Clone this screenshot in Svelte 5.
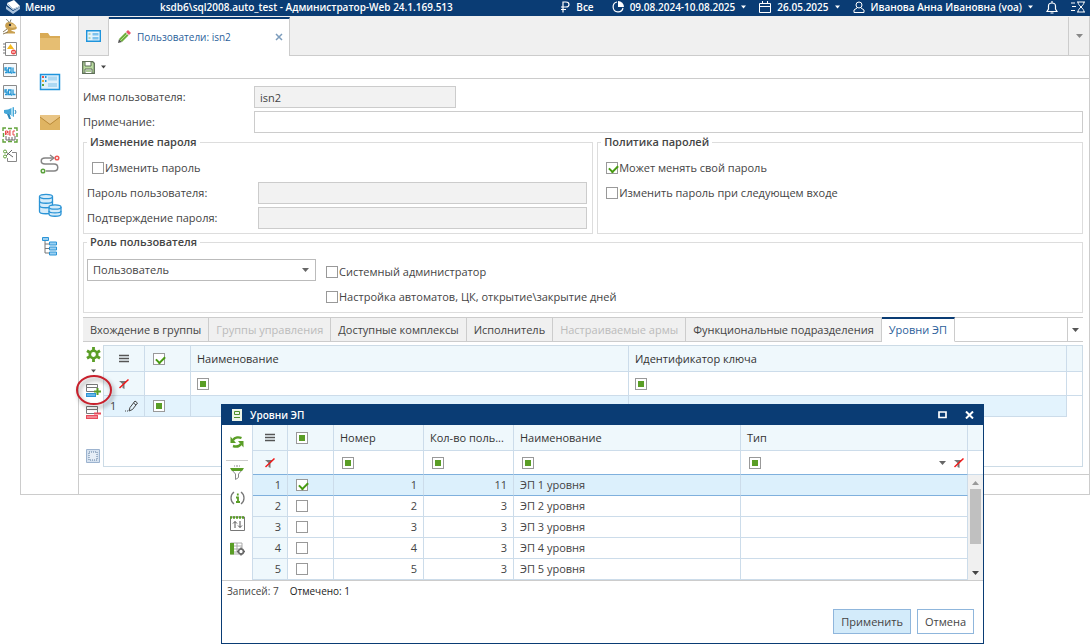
<script>
  const tools = ['bug', 'alert', 'sql', 'sql', 'horn', 'rec', 'cut'];
  const sections = ['folder', 'cards', 'mail', 'route', 'base', 'tree'];

  const tabs = [
    { title: 'Вхождение в группы' },
    { title: 'Группы управления', disabled: true },
    { title: 'Доступные комплексы' },
    { title: 'Исполнитель' },
    { title: 'Настраиваемые армы', disabled: true },
    { title: 'Функциональные подразделения' },
    { title: 'Уровни ЭП' }
  ];
  let activeTab = $state('Уровни ЭП');

  let levels = $state([
    { id: 1, users: 11, name: 'ЭП 1 уровня', checked: true },
    { id: 2, users: 3, name: 'ЭП 2 уровня', checked: false },
    { id: 3, users: 3, name: 'ЭП 3 уровня', checked: false },
    { id: 4, users: 3, name: 'ЭП 4 уровня', checked: false },
    { id: 5, users: 3, name: 'ЭП 5 уровня', checked: false }
  ]);
  let marked = $derived(levels.filter((l) => l.checked).length);
</script>

{#snippet caret()}
  <svg class="caret" width="7" height="4" viewBox="0 0 7 4"><path d="M0 0h7L3.500 4z" fill="currentColor" /></svg>
{/snippet}

{#snippet lines()}
  <svg width="10" height="9" viewBox="0 0 10 9"><path d="M0 1.500h10M0 4.500h10M0 7.500h10" stroke="#555" stroke-width="1.500" /></svg>
{/snippet}

{#snippet nofilter()}
  <svg width="10" height="10" viewBox="0 0 10 10"><path d="M0 2h8L5.500 5v5l-2-1V5z" fill="#777" /><path d="M.5 9L9.500.5" stroke="#f01818" stroke-width="1.500" /></svg>
{/snippet}

{#snippet icon(name)}
  {#if name === 'bug'}
    <svg width="16" height="16" viewBox="0 0 16 16">
      <path d="M3 14c2-1 3-2 3-3L4 9C2 6 4 3 7 3c4 0 7 3 8 6-1 2-4 2-6 2l1 1 3 1v1.500H4z" fill="#c9a050" />
      <path d="M7 5c3-1 6 1 7 3-2 1-5 1-7 0z" fill="#edc880" />
      <path d="M4 .5c1 0 2 1 3 3M9 .5L8 3" stroke="#776" fill="none" /><circle cx="8" cy="6" r="1.200" fill="#333" />
      <path d="M1 13l4-3M1 15l5-2" stroke="#8b7a5a" fill="none" />
    </svg>
  {:else if name === 'alert'}
    <svg width="16" height="16" viewBox="0 0 16 16">
      <path d="M3.500 1.500h11v13h-11z" fill="#fff" stroke="#8a8a8a" />
      <path d="M1 3h3M1 6h3M1 9h3M1 12h3" stroke="#777" />
      <path d="M8.500 3l3.500 5H5z" fill="#f5b91f" /><circle cx="11.500" cy="11" r="2.500" fill="#ea4848" /><path d="M10 11h3" stroke="#fff" />
    </svg>
  {:else if name === 'sql'}
    <svg width="16" height="16" viewBox="0 0 16 16">
      <path d="M1.500 1.500h13v13h-13z" fill="#f4f9fc" stroke="#8a8a8a" />
      <path d="M5 6H3v2h2v2.500H3M6.500 6h2.500v4.500H6.500zM8 9.500l2 2M11 5.500v5h2.500" fill="none" stroke="#2495d3" stroke-width="1.300" />
    </svg>
  {:else if name === 'horn'}
    <svg width="16" height="16" viewBox="0 0 16 16">
      <path d="M2 5l4-.500L12 2v10L7 9H4L2 8z" fill="#45a7d8" /><path d="M5 9l2 5h2L7.500 9z" fill="#2c86b8" /><path d="M10 3v8" stroke="#a4d9f1" stroke-width="2" /><path d="M13 5l1 2-1 2" stroke="#2c86b8" fill="none" />
    </svg>
  {:else if name === 'rec'}
    <svg width="16" height="16" viewBox="0 0 16 16">
      <path d="M1 4V1h3M6 1.500h4M12 1h3v3M15 6v4M15 12v3h-3M10 14.500H6M4 15H1v-3M1.500 10V6" fill="none" stroke="#61a33a" stroke-width="1.400" />
      <path d="M4 9v4h9V9M7 13v-3M10 13v-3" fill="none" stroke="#666" />
      <path d="M3.500 8V4h2v2h-2l2 2M9 4H7v4h2M7 6h2M13 4h-2v4h2" fill="none" stroke="#e74b4b" />
    </svg>
  {:else if name === 'cut'}
    <svg width="16" height="16" viewBox="0 0 16 16">
      <path d="M10 4.500h4.500v9h-9V10" fill="none" stroke="#888" />
      <path d="M4 4l7 5M4 8l6-6" stroke="#666" /><circle cx="3" cy="3.500" r="1.500" fill="none" stroke="#61a33a" /><circle cx="3" cy="8.500" r="1.500" fill="none" stroke="#61a33a" />
    </svg>
  {:else if name === 'folder'}
    <svg width="22" height="20" viewBox="0 0 22 20"><path d="M1 2h8l2 3h10v14H1z" fill="#d9ab56" /><path d="M1 7h20v12H1z" fill="#e6be72" /></svg>
  {:else if name === 'cards'}
    <svg width="22" height="20" viewBox="0 0 22 20">
      <path d="M1.500 2.500h19v15h-19z" fill="#dff1fc" stroke="#1e94dc" stroke-width="1.500" />
      <path d="M9 4.500h9v4H9zM9 11h9v4H9z" fill="#abd8f3" /><path d="M3 5h2" stroke="#e7534c" stroke-width="2" /><path d="M3 9h2" stroke="#e9a93a" stroke-width="2" /><path d="M3 13h2" stroke="#5ba23d" stroke-width="2" /><path d="M6 5h1.500M6 9h1.500" stroke="#1e94dc" stroke-width="2" />
    </svg>
  {:else if name === 'mail'}
    <svg width="22" height="20" viewBox="0 0 22 20"><path d="M1 2h20v15H1z" fill="#dfb462" /><path d="M1 2h20v2l-10 7L1 4z" fill="#e9c585" /><path d="M1 4l10 7.500L21 4" fill="none" stroke="#b98a3a" /></svg>
  {:else if name === 'route'}
    <svg width="22" height="20" viewBox="0 0 22 20">
      <path d="M14 4H6C1 4 1 10 6 10h9c5 0 5 7 0 7H7" fill="none" stroke="#858585" stroke-width="1.500" /><path d="M11 1l4 3-4 3" fill="none" stroke="#858585" stroke-width="1.300" />
      <circle cx="18" cy="4" r="1.800" fill="none" stroke="#ee5855" stroke-width="1.500" /><circle cx="4" cy="17" r="1.800" fill="none" stroke="#5ba23d" stroke-width="1.500" />
    </svg>
  {:else if name === 'base'}
    <svg width="24" height="24" viewBox="0 0 24 24" fill="#d6ecfa" stroke="#2b94d6" stroke-width="1.300">
      <path d="M1.500 3.500v15c0 3 13 3 13 0v-15" /><ellipse cx="8" cy="3.500" rx="6.500" ry="2.200" /><path d="M1.500 8c0 3 13 3 13 0M1.500 12.500c0 3 13 3 13 0" fill="none" />
      <path d="M11 14v7c0 3 12 3 12 0v-7" /><ellipse cx="17" cy="14" rx="6" ry="2.200" /><path d="M11 18c0 2.500 12 2.500 12 0" fill="none" />
    </svg>
  {:else if name === 'tree'}
    <svg width="22" height="20" viewBox="0 0 22 20">
      <path d="M6 4v13M6 8h4M6 12.500h4M6 17h4" fill="none" stroke="#777" />
      <path d="M3.500 1.500h6v3h-6zM10.500 6h7v3h-7zM10.500 11h7v3h-7zM10.500 16h7v3h-7z" fill="#9bd0f2" stroke="#2b94d6" />
    </svg>
  {/if}
{/snippet}

<div class="app">
  <header class="topbar">
    <button class="menu">
      <svg width="16" height="14" viewBox="0 0 16 14"><path d="M2 3l7-3 6 6-7 3z" fill="#fff" /><path d="M1 6l7 5 7-4v2l-7 5-7-5z" fill="#a9c2dc" /><path d="M2 3v2l6 5 7-3V6L8 9z" fill="#d9e5f0" /></svg>
      Меню
    </button>
    <span class="product">ksdb6\sql2008.auto_test - Администратор-Web 24.1.169.513</span>
    <nav class="status">
      <button class="all">
        <svg width="10" height="12" viewBox="0 0 10 12"><path d="M3 11.500V1h3c4 0 4 5 0 5H1M1 8.500h5" fill="none" stroke="#fff" stroke-width="1.200" /></svg>
        Все
      </button>
      <button>
        <svg width="12" height="12" viewBox="0 0 12 12"><path d="M5 1a5 5 0 1 0 6 6" fill="none" stroke="#fff" stroke-width="1.200" /><path d="M6 0a6 6 0 0 1 6 6H6z" fill="#fff" /></svg>
        09.08.2024-10.08.2025 {@render caret()}
      </button>
      <button>
        <svg width="12" height="12" viewBox="0 0 12 12"><path d="M.5 2.500h11v9H.5zM.5 5.500h11M3.500 0v3M8.500 0v3" fill="none" stroke="#fff" /></svg>
        26.05.2025 {@render caret()}
      </button>
      <button>
        <svg width="12" height="12" viewBox="0 0 12 12"><circle cx="6" cy="4" r="3" fill="none" stroke="#fff" /><path d="M4 7L1 9v2.500h10V9L8 7" fill="none" stroke="#fff" /></svg>
        Иванова Анна Ивановна (voa) {@render caret()}
      </button>
      <button aria-label="Уведомления">
        <svg width="12" height="13" viewBox="0 0 12 13"><path d="M1 10.500h10L9.500 8V5c0-4-7-4-7 0v3zM6 0v2M4.500 12h3" fill="none" stroke="#fff" stroke-width="1.200" /></svg>
      </button>
      <button aria-label="Очередь">
        <svg width="14" height="12" viewBox="0 0 14 12"><path d="M0 2h4M1 5.500h4M0 9.500h4M6 1h8M6 11h8M7 1c0 4 6 6 6 10M13 1c0 4-6 6-6 10" fill="none" stroke="#fff" /></svg>
      </button>
    </nav>
  </header>

  <div class="workspace">
    <nav class="rail tools">
      {#each tools as name}
        <button aria-label={name}>{@render icon(name)}</button>
      {/each}
    </nav>
    <div class="frame">
      <nav class="rail sections">
        {#each sections as name}
          <button aria-label={name}>{@render icon(name)}</button>
        {/each}
      </nav>

      <main>
        <div class="pages">
          <button class="home" aria-label="Рабочий стол">
            <svg width="15" height="12" viewBox="0 0 15 12"><path d="M.7.7h13.600v10.600H.7z" fill="#e3f3fc" stroke="#1e94dc" stroke-width="1.400" /><path d="M6.500 3h6v2.500h-6zM6.500 7h6v2.500h-6z" fill="#7cc2ee" /><path d="M2.500 4h2M2.500 8h2" stroke="#8ab46e" /></svg>
          </button>
          <div class="page">
            <svg width="13" height="13" viewBox="0 0 13 13"><path d="M0 13l1-4 3 3z" fill="#555" /><path d="M1 9l6.500-6.500 3 3L4 12z" fill="#6fae3d" /><path d="M2.500 10.500L9 4" stroke="#b7dd8f" /><path d="M8 2l2-2 3 3-2 2z" fill="#e9566c" /></svg>
            <span>Пользователи: isn2</span>
            <button aria-label="Закрыть вкладку">
              <svg width="8" height="8" viewBox="0 0 8 8"><path d="M1 1l6 6M7 1L1 7" stroke="#7c9cbc" stroke-width="1.500" /></svg>
            </button>
          </div>
          <button class="more" aria-label="Список вкладок">{@render caret()}</button>
        </div>

        <div class="actions">
          <button aria-label="Сохранить">
            <svg width="13" height="13" viewBox="0 0 13 13"><path d="M.7.7h10l1.600 1.600v10H.7z" fill="#b9da9f" stroke="#5f6f58" stroke-width="1.300" /><path d="M3 1v4h6V1M3 12V8h7v4" fill="#fff" stroke="#5f6f58" /><path d="M4 10h5" stroke="#5f9b35" /></svg>
            {@render caret()}
          </button>
        </div>

        <form class="card" onsubmit={(e) => e.preventDefault()}>
          <div class="field">
            <label for="user">Имя пользователя:</label>
            <input id="user" class="short" type="text" value="isn2" readonly />
          </div>
          <div class="field">
            <label for="note">Примечание:</label>
            <input id="note" type="text" />
          </div>

          <div class="pair">
            <fieldset>
              <legend>Изменение пароля</legend>
              <label class="tick"><input type="checkbox" />Изменить пароль</label>
              <div class="field">
                <label for="pass">Пароль пользователя:</label>
                <input id="pass" type="password" readonly />
              </div>
              <div class="field">
                <label for="pass2">Подтверждение пароля:</label>
                <input id="pass2" type="password" readonly />
              </div>
            </fieldset>
            <fieldset>
              <legend>Политика паролей</legend>
              <label class="tick"><input type="checkbox" checked />Может менять свой пароль</label>
              <label class="tick"><input type="checkbox" />Изменить пароль при следующем входе</label>
            </fieldset>
          </div>

          <fieldset>
            <legend>Роль пользователя</legend>
            <div class="role">
              <div class="select">
                <select aria-label="Роль пользователя">
                  <option>Пользователь</option>
                </select>
                {@render caret()}
              </div>
              <div class="flags">
                <label class="tick"><input type="checkbox" />Системный администратор</label>
                <label class="tick"><input type="checkbox" />Настройка автоматов, ЦК, открытие\закрытие дней</label>
              </div>
            </div>
          </fieldset>

          <div class="tabs">
            {#each tabs as tab}
              <button
                type="button"
                class:active={tab.title === activeTab}
                disabled={tab.disabled}
                onclick={() => (activeTab = tab.title)}
              >{tab.title}</button>
            {/each}
            <span class="rest"></span>
            <button type="button" class="more" aria-label="Все вкладки">{@render caret()}</button>
          </div>

          <div class="panel">
            <div class="side">
              <button type="button" aria-label="Настройки">
                <svg width="15" height="15" viewBox="0 0 15 15"><circle cx="7.500" cy="7.500" r="3.700" fill="none" stroke="#5a9e26" stroke-width="2.600" /><path d="M7.500 0v3.500M7.500 11.500V15M1 3.700l3 1.800M11 9.500l3 1.800M1 11.300l3-1.800M11 5.500l3-1.800" stroke="#5a9e26" stroke-width="2.800" /></svg>
                {@render caret()}
              </button>
              <button type="button" class="add" aria-label="Добавить">
                <svg width="16" height="15" viewBox="0 0 16 15"><path d="M1.500 1.500h11v3h-11zM1.500 4.500h11v4h-11z" fill="#fff" stroke="#777" /><path d="M1 10h10v4H1z" fill="#2b94d6" /><path d="M2 12h8" stroke="#a9d6f3" /><path d="M12.500 5v7M9 8.500h7" stroke="#5a9e26" stroke-width="2" /></svg>
              </button>
              <button type="button" class="remove" aria-label="Удалить">
                <svg width="16" height="15" viewBox="0 0 16 15"><path d="M1.500 1.500h11v3h-11zM1.500 4.500h11v4h-11z" fill="#fff" stroke="#777" /><path d="M1 10h12v4H1z" fill="#e94a5a" /><path d="M2 12h10" stroke="#fbc4ca" /><path d="M9 8.500h7" stroke="#e94a5a" stroke-width="2" /></svg>
              </button>
              <button type="button" aria-label="Выделить все">
                <svg width="14" height="14" viewBox="0 0 14 14"><path d="M.5.5h13v13H.5z" fill="#d6e2f0" stroke="#9cb3cf" /><path d="M3 3h8v8H3z" fill="#e6eef7" stroke="#5f7c9e" stroke-dasharray="1 1" /></svg>
              </button>
            </div>
            <div class="grid">
              <table>
                <colgroup><col class="c-row" /><col class="c-mark" /><col /><col /></colgroup>
                <thead>
                  <tr>
                    <th class="mid">{@render lines()}</th>
                    <th class="box"><input type="checkbox" checked aria-label="Отметить все" /></th>
                    <th>Наименование</th>
                    <th>Идентификатор ключа</th>
                  </tr>
                  <tr class="filter">
                    <td class="mid head">{@render nofilter()}</td>
                    <td></td>
                    <td><input class="part" type="checkbox" aria-label="Фильтр по наименованию" /></td>
                    <td><input class="part" type="checkbox" aria-label="Фильтр по идентификатору" /></td>
                  </tr>
                </thead>
                <tbody>
                  <tr class="current">
                    <td>
                      <span class="edit">1
                        <svg width="13" height="12" viewBox="0 0 13 12"><path d="M4 11l1-3.500L10 1l2.500 2L7.500 9.500zM8.500 3l2.500 2" fill="none" stroke="#444" /><path d="M0 11h1M2 11h1" stroke="#444" /></svg>
                      </span>
                    </td>
                    <td class="box"><input class="part" type="checkbox" aria-label="Отметить строку 1" /></td>
                    <td></td>
                    <td></td>
                  </tr>
                </tbody>
              </table>
              <div class="gutter"><div class="cap"></div><div class="subcap"></div></div>
            </div>
          </div>
        </form>
      </main>
    </div>
  </div>

  <svg class="ring" width="42" height="38" viewBox="0 0 42 38"><ellipse cx="19" cy="17" rx="17" ry="14" fill="none" stroke="#c8202c" stroke-width="2" /></svg>

  <div class="dialog" role="dialog" aria-labelledby="dialog-title">
    <div class="caption">
      <svg width="10" height="12" viewBox="0 0 10 12"><path d="M0 0h10v12H0z" fill="#eef5e8" /><path d="M2.500 2.500h5v3h-5zM2 8.500h6" fill="none" stroke="#4f8f2c" /></svg>
      <h2 id="dialog-title">Уровни ЭП</h2>
      <button aria-label="Развернуть"><svg width="9" height="8" viewBox="0 0 9 8"><path d="M1 1h7v5.500H1z" fill="none" stroke="#fff" stroke-width="1.700" /></svg></button>
      <button aria-label="Закрыть"><svg width="9" height="8" viewBox="0 0 9 8"><path d="M1 .5l7 7M8 .5l-7 7" stroke="#fff" stroke-width="2" /></svg></button>
    </div>
    <div class="list">
      <div class="strip">
        <button aria-label="Обновить">
          <svg width="14" height="14" viewBox="0 0 14 14"><path d="M3 5C5 2 9 2 11.500 3M11 9c-2 3-5 3-8 2" fill="none" stroke="#5a9e26" stroke-width="2.400" /><path d="M.5 1.500V8H6zM13.500 12.500V6H8z" fill="#5a9e26" /></svg>
        </button>
        <hr />
        <button aria-label="Фильтр">
          <svg width="14" height="15" viewBox="0 0 14 15"><path d="M1 4h12L8.500 9v3.500l-3 2V9z" fill="#fff" stroke="#888" /><path d="M0 3h14l-2 3H2z" fill="#5a9e26" /><path d="M4 1h1M7 0v2M9 1h1" stroke="#888" /></svg>
        </button>
        <button aria-label="Информация">
          <svg width="15" height="14" viewBox="0 0 15 14"><path d="M4 1C0 4 0 10 4 13M11 1c4 3 4 9 0 12" fill="none" stroke="#777" stroke-width="1.300" /><path d="M7.800 2.500v2M6 6.500h2V11M6 11h4" fill="none" stroke="#5a9e26" stroke-width="1.800" /></svg>
        </button>
        <button aria-label="Сортировка">
          <svg width="15" height="15" viewBox="0 0 15 15"><path d="M.5 1h14v13.500H.5z" fill="#fff" stroke="#777" /><path d="M0 1.500h15" stroke="#5a9e26" stroke-width="2.400" stroke-dasharray="2 1" /><path d="M5 12V5.500M3 7.500l2-2 2 2M10 5v6.500M8 9.500l2 2 2-2" fill="none" stroke="#555" /></svg>
        </button>
        <button aria-label="Колонки">
          <svg width="15" height="14" viewBox="0 0 15 14"><path d="M.5 1h11.500v11H.5zM4 4h8M4 7h6M4 10h4M7 1v9" fill="#fff" stroke="#aaa" /><path d="M0 1h4v11.500H0z" fill="#5a9e26" /><circle cx="11" cy="9.500" r="2.500" fill="#fff" stroke="#666" stroke-width="1.700" /><path d="M11 5.500v1.500M11 12v1.500M7 9.500h1.500M13.500 9.500H15" stroke="#666" stroke-width="1.500" /></svg>
        </button>
      </div>
      <table>
        <colgroup><col class="d-row" /><col class="c-mark" /><col class="d-num" /><col class="d-num" /><col /><col /></colgroup>
        <thead>
          <tr>
            <th class="mid">{@render lines()}</th>
            <th><input class="part" type="checkbox" aria-label="Отметить все уровни" /></th>
            <th>Номер</th>
            <th>Кол-во поль...</th>
            <th>Наименование</th>
            <th>Тип</th>
          </tr>
          <tr class="filter">
            <td class="mid head">{@render nofilter()}</td>
            <td></td>
            <td><input class="part" type="checkbox" aria-label="Фильтр по номеру" /></td>
            <td><input class="part" type="checkbox" aria-label="Фильтр по количеству" /></td>
            <td><input class="part" type="checkbox" aria-label="Фильтр по имени уровня" /></td>
            <td>
              <div class="kind">
                <input class="part" type="checkbox" aria-label="Фильтр по типу" />
                {@render caret()}
                {@render nofilter()}
              </div>
            </td>
          </tr>
        </thead>
        <tbody>
          {#each levels as level, i}
            <tr class:selected={i === 0}>
              <td class="num head">{i + 1}</td>
              <td><input type="checkbox" bind:checked={level.checked} aria-label={level.name} /></td>
              <td class="num">{level.id}</td>
              <td class="num">{level.users}</td>
              <td>{level.name}</td>
              <td></td>
            </tr>
          {/each}
        </tbody>
      </table>
      <div class="gutter">
        <div class="cap"></div>
        <div class="subcap"></div>
        <div class="track">
          <svg width="7" height="4" viewBox="0 0 7 4"><path d="M0 4h7L3.500 0z" fill="#999" /></svg>
          <div class="thumb"></div>
          {@render caret()}
        </div>
      </div>
    </div>
    <p class="totals"><span>Записей: 7</span><span class="marked">Отмечено: {marked}</span></p>
    <div class="buttons">
      <button class="apply">Применить</button>
      <button>Отмена</button>
    </div>
  </div>
</div>

<style>
  :global(body) {
    margin: 0;
    background: #fff;
  }

  .app,
  .app :global(*) {
    box-sizing: border-box;
  }

  .app {
    position: relative;
    min-height: 100vh;
    overflow: hidden;
    font: 11px/16px "Open Sans", "Noto Sans", sans-serif;
    color: #444;
  }

  button,
  input,
  select {
    font: inherit;
    color: inherit;
    margin: 0;
  }

  button {
    display: flex;
    align-items: center;
    justify-content: center;
    padding: 0;
    border: 0;
    background: none;
    cursor: pointer;
  }

  svg {
    display: block;
    flex: none;
  }

  .topbar {
    display: flex;
    align-items: center;
    height: 16px;
    padding: 0 5px 2px;
    background: #0a3c74;
    color: #fff;
    font-size: 10px;
    font-weight: 600;
  }

  .menu {
    gap: 4px;
    width: 155px;
    justify-content: flex-start;
  }

  .product {
    white-space: nowrap;
  }

  .status {
    display: flex;
    align-items: center;
    gap: 13px;
    margin-left: auto;
    white-space: nowrap;
  }

  .status button {
    gap: 6px;
  }

  .status .all {
    margin-right: 5px;
  }

  .status .caret {
    width: 5px;
  }

  .workspace {
    display: flex;
    height: 479px;
  }

  .rail {
    display: flex;
    flex-direction: column;
    align-items: center;
    flex: none;
  }

  .tools {
    justify-content: space-between;
    width: 20px;
    height: 148px;
    padding-top: 3px;
  }

  .frame {
    display: flex;
    flex: 1;
    min-width: 0;
    border: solid #ccc;
    border-width: 0 1px 1px;
  }

  .sections {
    width: 58px;
    padding-top: 14px;
    gap: 19px;
    border-right: 1px solid #ccc;
  }

  .sections button {
    height: 22px;
  }

  main {
    flex: 1;
    min-width: 0;
  }

  .pages {
    display: flex;
    height: 40px;
    padding-top: 1px;
    background: #f0f0f0;
    border-bottom: 1px solid #ccc;
  }

  .home {
    width: 30px;
    border-right: 1px solid #ccc;
  }

  .page {
    display: flex;
    align-items: center;
    gap: 6px;
    width: 181px;
    height: 39px;
    padding: 0 6px 2px 9px;
    background: #fff;
    border-top: 2px solid #0a3c74;
    border-right: 1px solid #ccc;
    font-size: 10px;
    color: #2c5f9b;
  }

  .page button {
    margin-left: auto;
  }

  .pages .more {
    width: 21px;
    margin-left: auto;
    border-left: 1px solid #ccc;
    color: #888;
  }

  .actions {
    display: flex;
    height: 23px;
    padding-left: 3px;
    border-bottom: 1px solid #ccc;
  }

  .actions button {
    gap: 6px;
  }

  .actions .caret {
    width: 5px;
  }

  .card {
    display: flex;
    flex-direction: column;
    height: 396px;
    padding: 7px 6px 7px 4px;
    border-bottom: 1px solid #ccc;
  }

  .field {
    display: flex;
    align-items: center;
    height: 22px;
    margin-bottom: 3px;
  }

  .field label {
    flex: none;
    width: 171px;
  }

  .field input {
    flex: 1;
    min-width: 0;
    height: 22px;
    padding: 0 5px;
    border: 1px solid #ccc;
    background: #fff;
    outline: none;
  }

  .field .short {
    flex: none;
    width: 202px;
  }

  .field input:read-only {
    background: #f2f2f2;
  }

  .pair {
    display: grid;
    grid-template-columns: 21fr 20fr;
    gap: 4px;
    margin-bottom: 2px;
  }

  fieldset {
    min-width: 0;
    margin: 0;
    padding: 9px 5px 1px 3px;
    border: 1px solid #ddd;
  }

  legend {
    padding: 0 3px;
    line-height: 12px;
    font-weight: 600;
  }

  .tick {
    display: flex;
    align-items: center;
    gap: 1px;
    height: 22px;
    margin-bottom: 3px;
    padding-left: 5px;
    white-space: nowrap;
  }

  input[type='checkbox'] {
    appearance: none;
    position: relative;
    display: block;
    flex: none;
    width: 12px;
    height: 12px;
    border: 1px solid #999;
    background: #fff;
  }

  input[type='checkbox']:checked::after {
    content: '';
    position: absolute;
    left: 2px;
    top: 2px;
    width: 7px;
    height: 4px;
    border: solid #479b11;
    border-width: 0 0 2px 2px;
    transform: rotate(-45deg);
  }

  .part::after {
    content: '';
    position: absolute;
    inset: 2px;
    background: #5a9e26;
  }

  .role {
    display: flex;
    gap: 5px;
    padding-top: 2px;
  }

  .select {
    position: relative;
    width: 229px;
    height: 22px;
  }

  .select select {
    width: 100%;
    height: 22px;
    padding: 0 5px;
    border: 1px solid #bbb;
    border-radius: 0;
    background: #fff;
    appearance: none;
  }

  .select .caret {
    position: absolute;
    right: 7px;
    top: 9px;
    color: #666;
    pointer-events: none;
  }

  .flags {
    padding-top: 2px;
  }

  .tabs {
    display: flex;
    flex: none;
    height: 25px;
    margin: 4px 0 3px;
  }

  .tabs button {
    padding: 0 7px;
    border: solid #ccc;
    border-width: 1px 1px 1px 0;
    background: #f0f0f0;
    white-space: nowrap;
  }

  .tabs button:disabled {
    color: #bbb;
  }

  .tabs .active {
    border-top: 2px solid #0a3c74;
    border-bottom-color: #fff;
    background: #fff;
    color: #2c5f9b;
  }

  .rest {
    flex: 1;
    border: solid #ccc;
    border-width: 1px 0;
  }

  .tabs .more {
    width: 16px;
    padding: 0;
    border-width: 1px 0 1px 1px;
    background: #fff;
    color: #555;
  }

  .panel {
    display: flex;
    flex: 1;
    min-height: 0;
  }

  .side {
    display: flex;
    flex-direction: column;
    flex: none;
    align-items: center;
    gap: 7px;
    width: 20px;
    padding: 2px 0 4px;
  }

  .side button {
    flex-direction: column;
    gap: 7px;
  }

  .side button:last-child {
    margin-top: auto;
  }

  .side .caret {
    width: 5px;
    color: #555;
  }

  .add {
    padding-top: 3px;
  }

  .grid {
    display: flex;
    flex: 1;
    align-items: flex-start;
    min-width: 0;
    border: 1px solid #ccdbe6;
  }

  table {
    flex: 1;
    width: 0;
    border-spacing: 0;
    table-layout: fixed;
  }

  th,
  td {
    height: 21px;
    padding: 0 6px;
    border: solid #ccdcea;
    border-width: 0 1px 1px 0;
    font-weight: 400;
    text-align: left;
    white-space: nowrap;
    overflow: hidden;
  }

  th {
    height: 26px;
    background: #eff8fc;
    color: #333;
  }

  .filter td {
    height: 24px;
  }

  td.head {
    background: #eff8fc;
  }

  .mid svg {
    margin: 0 auto;
  }

  td.num {
    text-align: right;
  }

  .c-row {
    width: 41px;
  }

  .c-mark {
    width: 46px;
  }

  .box {
    padding-left: 8px;
  }

  .current td {
    background: #e3f3fd;
  }

  .edit {
    display: flex;
    align-items: center;
    justify-content: space-between;
  }

  .gutter {
    display: flex;
    flex-direction: column;
    align-self: stretch;
    flex: none;
    width: 15px;
  }

  .cap {
    height: 26px;
    background: #eff8fc;
    border-bottom: 1px solid #ccdcea;
  }

  .subcap {
    height: 24px;
    border-bottom: 1px solid #ccdcea;
  }

  .ring {
    position: absolute;
    left: 75px;
    top: 373px;
    filter: drop-shadow(2px 3px 2px rgba(0, 0, 0, 0.4));
    pointer-events: none;
  }

  .dialog {
    position: absolute;
    left: 221px;
    top: 404px;
    width: 763px;
    height: 240px;
    border: 1px solid #0a3c74;
    background: #fff;
  }

  .caption {
    display: flex;
    align-items: center;
    gap: 8px;
    height: 20px;
    padding: 0 9px 0 10px;
    background: #0a3c74;
    color: #fff;
  }

  .caption h2 {
    flex: 1;
    margin: 0;
    font-size: 10px;
    font-weight: 600;
  }

  .caption button {
    margin-left: 10px;
  }

  .list {
    display: flex;
    border-bottom: 1px solid #ccc;
  }

  .strip {
    display: flex;
    flex-direction: column;
    align-items: center;
    gap: 11px;
    width: 31px;
    padding-top: 10px;
    border-right: 1px solid #ccdcea;
  }

  .strip hr {
    width: 22px;
    margin: 0 0 -7px;
    border: 0;
    border-top: 1px solid #ccc;
  }

  .d-row {
    width: 35px;
  }

  .d-num {
    width: 90px;
  }

  .dialog th input,
  .dialog td input {
    margin-left: 2px;
  }

  .kind {
    display: flex;
    align-items: center;
    gap: 8px;
    color: #666;
  }

  .dialog .kind input {
    margin-right: auto;
  }

  .kind :global(svg:last-child) {
    margin-right: -3px;
  }

  .selected td {
    background: #dcf0fc;
    border-bottom-color: #7fb0dd;
  }

  .dialog .filter td {
    border-bottom-color: #7fb0dd;
  }

  .track {
    display: flex;
    flex-direction: column;
    align-items: center;
    flex: 1;
    gap: 4px;
    padding: 6px 0 5px;
    background: #f0f0f0;
  }

  .thumb {
    width: 11px;
    height: 55px;
    background: #c0c0c0;
  }

  .track .caret {
    margin-top: auto;
  }

  .totals {
    display: flex;
    gap: 11px;
    margin: 2px 5px 10px;
    font-size: 10px;
  }

  .marked {
    color: #222;
  }

  .buttons {
    display: flex;
    justify-content: flex-end;
    gap: 6px;
    padding-right: 9px;
  }

  .buttons button {
    height: 25px;
    padding: 0 7px;
    border: 1px solid #8fb6dc;
    background: #fff;
  }

  .buttons .apply {
    background: #d3ebfa;
  }
</style>
